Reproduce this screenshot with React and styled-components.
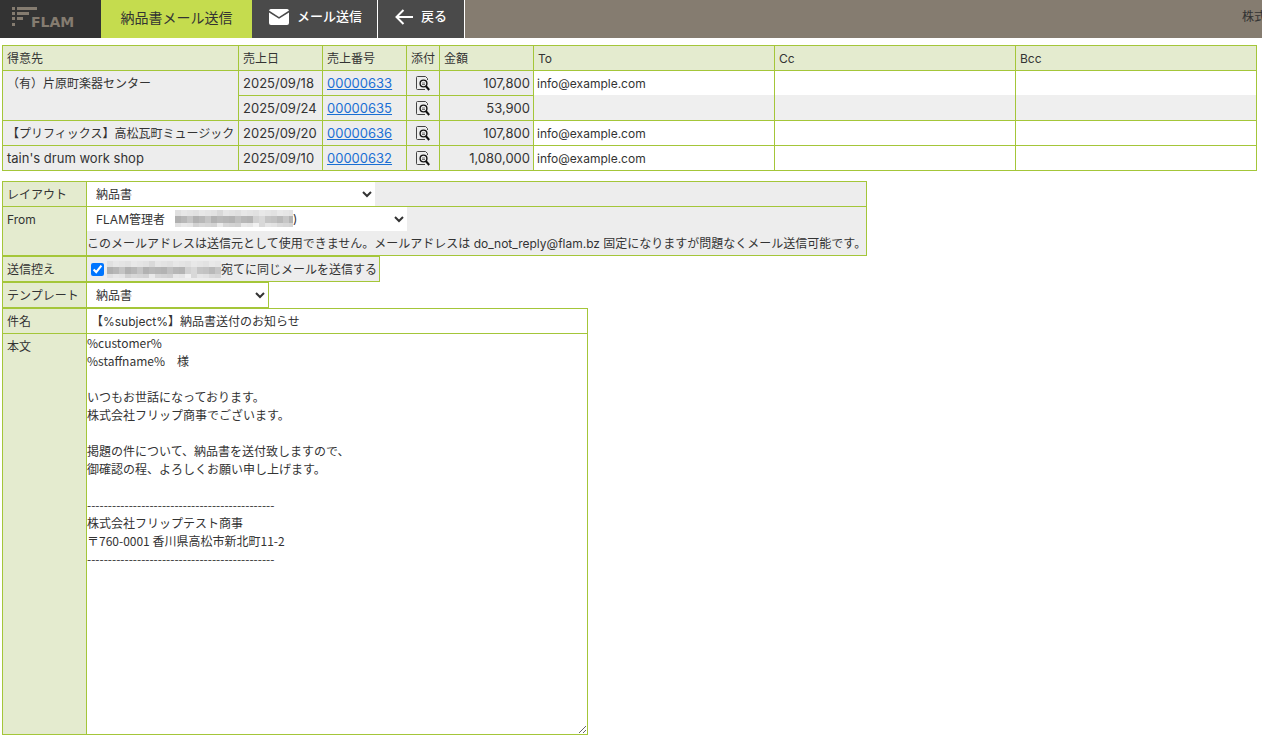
import { useState } from "react";
import styled, { createGlobalStyle } from "styled-components";

const sales = [
  {
    customer: "（有）片原町楽器センター",
    to: "info@example.com",
    slips: [
      { date: "2025/09/18", no: "00000633", amount: "107,800" },
      { date: "2025/09/24", no: "00000635", amount: "53,900" },
    ],
  },
  {
    customer: "【プリフィックス】高松瓦町ミュージック",
    to: "info@example.com",
    slips: [{ date: "2025/09/20", no: "00000636", amount: "107,800" }],
  },
  {
    customer: "tain's drum work shop",
    to: "info@example.com",
    slips: [{ date: "2025/09/10", no: "00000632", amount: "1,080,000" }],
  },
];

const isLatin = (text) => /^[\x20-\x7e]+$/.test(text);

const line = "-".repeat(45);

const mailBody = `%customer%
%staffname%　様

いつもお世話になっております。
株式会社フリップ商事でございます。

掲題の件について、納品書を送付致しますので、
御確認の程、よろしくお願い申し上げます。

${line}
株式会社フリップテスト商事
〒760-0001 香川県高松市新北町11-2
${line}`;

// one hex digit per 6px block, f = lightest
const mosaicRows = [
  "eeeeeeedeeeeeeeeeeee",
  "bbcbbcbbbbcbbddccbcb",
  "eeeddddedddeefdeeddd",
];

const Mosaic = ({ width }) => (
  <svg width={width} height="17" aria-hidden="true" shapeRendering="crispEdges">
    {mosaicRows.map((row, y) =>
      row.split("").map((c, x) => (
        <rect
          key={`${x}-${y}`}
          x={x * 6}
          y={[0, 6, 13][y]}
          width="6"
          height={[6, 7, 4][y]}
          fill={`#${c}${(x * 7) % 10}${c}${(x * 7) % 10}${c}${(x * 7) % 10}`}
        />
      ))
    )}
  </svg>
);

const LogoMark = () => (
  <svg width="26" height="20" fill="#857c70" aria-hidden="true">
    <path d="M0 0h3v3H0zM0 5h3v3H0zM0 10h3v3H0zM0 16h3v3H0z" />
    <path d="M5 0h20v3H5zM5 5h12v3H5zM5 10h6v3H5z" />
  </svg>
);

const MailIcon = () => (
  <svg width="20" height="16" viewBox="0 0 20 16" aria-hidden="true">
    <path fill="#fff" d="M2 0h16a2 2 0 0 1 2 1.5L10 8 0 1.5A2 2 0 0 1 2 0z" />
    <path fill="#fff" d="M0 3.5l10 6.3 10-6.3V14a2 2 0 0 1-2 2H2a2 2 0 0 1-2-2z" />
  </svg>
);

const BackIcon = () => (
  <svg width="18" height="16" viewBox="0 0 18 16" fill="none" stroke="#fff" strokeWidth="2" aria-hidden="true">
    <path d="M8.5 1L1.5 8l7 7M1.5 8H18" />
  </svg>
);

const PreviewIcon = () => (
  <svg width="14" height="15" viewBox="0 0 14 15" fill="none" aria-hidden="true">
    <path d="M11.5 4V2.5L9.5.5H1.5a1 1 0 0 0-1 1v11a1 1 0 0 0 1 1H9" stroke="#444" />
    <circle cx="7.5" cy="7.5" r="3.4" stroke="#111" strokeWidth="1.4" />
    <path d="M6 7h3M6 8.5h3" stroke="#555" strokeWidth=".8" />
    <path d="M9.8 10l3.4 4" stroke="#111" strokeWidth="2" />
  </svg>
);

const App = () => {
  const [copy, setCopy] = useState(true);

  return (
    <>
      <GlobalStyle />
      <Header>
        <Logo>
          <LogoMark />
          <span>FLAM</span>
        </Logo>
        <PageTitle>納品書メール送信</PageTitle>
        <HeaderButton type="button" $width={125}>
          <MailIcon />
          <span>メール送信</span>
        </HeaderButton>
        <HeaderButton type="button" $width={86}>
          <BackIcon />
          <span>戻る</span>
        </HeaderButton>
        <Company>株式</Company>
      </Header>
      <Main>
        <SalesTable>
          <colgroup>
            <col style={{ width: 236 }} />
            <col style={{ width: 84 }} />
            <col style={{ width: 84 }} />
            <col style={{ width: 33 }} />
            <col style={{ width: 94 }} />
            <col />
            <col />
            <col />
          </colgroup>
          <thead>
            <tr>
              <Th>得意先</Th>
              <Th>売上日</Th>
              <Th>売上番号</Th>
              <Th>添付</Th>
              <Th>金額</Th>
              <Th>To</Th>
              <Th>Cc</Th>
              <Th>Bcc</Th>
            </tr>
          </thead>
          <tbody>
            {sales.map((row) =>
              row.slips.map((slip, i) => (
                <tr key={slip.no}>
                  {i === 0 && (
                    <Td rowSpan={row.slips.length} $large={isLatin(row.customer)}>
                      {row.customer}
                    </Td>
                  )}
                  <Td $large>{slip.date}</Td>
                  <Td $large>
                    <a href={`#${slip.no}`}>{slip.no}</a>
                  </Td>
                  <IconTd>
                    <IconButton type="button" aria-label={slip.no}>
                      <PreviewIcon />
                    </IconButton>
                  </IconTd>
                  <Td $large $align="right">{slip.amount}</Td>
                  {i === 0 &&
                    ["To", "Cc", "Bcc"].map((field) => (
                      <InputTd key={field} rowSpan={row.slips.length}>
                        {row.slips.map((s, n) => (
                          <AddressInput
                            key={s.no}
                            type="text"
                            aria-label={field}
                            disabled={n > 0}
                            defaultValue={field === "To" && n === 0 ? row.to : ""}
                          />
                        ))}
                      </InputTd>
                    ))}
                </tr>
              ))
            )}
          </tbody>
        </SalesTable>

        <FormTable $width={865}>
          <tbody>
            <tr>
              <FormTh><label htmlFor="layout">レイアウト</label></FormTh>
              <FormTd>
                <Select id="layout" $width={288}>
                  <option>納品書</option>
                </Select>
              </FormTd>
            </tr>
            <tr>
              <FormTh><label htmlFor="from">From</label></FormTh>
              <FormTd>
                <SelectWrap>
                  <Select id="from" $width={320}>
                    <option>FLAM管理者</option>
                  </Select>
                  <Masked>
                    <Mosaic width={118} />)
                  </Masked>
                </SelectWrap>
                <Note>
                  このメールアドレスは送信元として使用できません。メールアドレスは do_not_reply@flam.bz 固定になりますが問題なくメール送信可能です。
                </Note>
              </FormTd>
            </tr>
          </tbody>
        </FormTable>
        <FormTable $width={378}>
          <tbody>
            <tr>
              <FormTh>送信控え</FormTh>
              <FormTd>
                <CheckLabel>
                  <input type="checkbox" checked={copy} onChange={(e) => setCopy(e.target.checked)} />
                  <Mosaic width={114} />
                  <span>宛てに同じメールを送信する</span>
                </CheckLabel>
              </FormTd>
            </tr>
          </tbody>
        </FormTable>
        <FormTable $width={267}>
          <tbody>
            <tr>
              <FormTh><label htmlFor="template">テンプレート</label></FormTh>
              <FormTd>
                <Select id="template" $width={181}>
                  <option>納品書</option>
                </Select>
              </FormTd>
            </tr>
          </tbody>
        </FormTable>
        <FormTable $width={586}>
          <tbody>
            <tr>
              <FormTh><label htmlFor="subject">件名</label></FormTh>
              <FormTd>
                <SubjectInput id="subject" type="text" defaultValue="【%subject%】納品書送付のお知らせ" />
              </FormTd>
            </tr>
            <tr>
              <FormTh><label htmlFor="body">本文</label></FormTh>
              <FormTd>
                <Body id="body" defaultValue={mailBody} spellCheck={false} />
              </FormTd>
            </tr>
          </tbody>
        </FormTable>
      </Main>
    </>
  );
};

export default App;

const GlobalStyle = createGlobalStyle`
  * {
    box-sizing: border-box;
  }
  body {
    margin: 0;
    overflow-x: hidden;
    background: #fff;
    color: #333;
    font-family: Inter, "Noto Sans CJK JP", sans-serif;
    font-size: 12px;
    font-weight: 400;
  }
  input, select, textarea, button {
    font: inherit;
    color: inherit;
  }
  svg {
    display: block;
    flex-shrink: 0;
  }
`;
const Header = styled.header`
  display: flex;
  height: 38px;
  overflow: hidden;
  background: #857c70;
`;
const Logo = styled.div`
  display: flex;
  width: 101px;
  padding: 7px 0 0 12px;
  background: #333;
  color: #857c70;
  span {
    margin: 7px 0 0 -7px;
    font: bold 14px/16px "DejaVu Sans", sans-serif;
  }
`;
const PageTitle = styled.h1`
  width: 151px;
  margin: 0;
  background: #c5dc4e;
  font-size: 14px;
  font-weight: 400;
  line-height: 36px;
  text-align: center;
`;
const HeaderButton = styled.button`
  display: flex;
  align-items: center;
  gap: 8px;
  width: ${(p) => p.$width + 1}px;
  padding: 0 0 4px 17px;
  border: none;
  border-right: 1px solid #fff;
  background: #4a4a4a;
  color: #fff;
  font-size: 13px;
  font-weight: 500;
  white-space: nowrap;
  cursor: pointer;
  span {
    padding-bottom: 3px;
  }
`;
const Company = styled.div`
  width: 20px;
  margin-left: auto;
  line-height: 33px;
  white-space: nowrap;
`;
const Main = styled.main`
  padding: 7px 5px 7px 2px;
`;
const SalesTable = styled.table`
  width: 100%;
  margin-bottom: 10px;
  border-collapse: collapse;
  table-layout: fixed;
`;
const Th = styled.th`
  height: 25px;
  padding: 2px 4px 0;
  border: 1px solid #a4c639;
  background: #e4ebcf;
  font-weight: 400;
  line-height: 22px;
  text-align: left;
  white-space: nowrap;
`;
const Td = styled.td`
  height: 25px;
  padding: ${(p) => (p.$large ? "0 3px 0 4px" : "2px 4px 0")};
  border: 1px solid #a4c639;
  background: #ededed;
  font-size: ${(p) => (p.$large ? 13 : 12)}px;
  line-height: ${(p) => (p.$large ? 24 : 22)}px;
  text-align: ${(p) => p.$align || "left"};
  vertical-align: top;
  white-space: nowrap;
  a {
    color: #1a6fd4;
  }
`;
const IconTd = styled(Td)`
  padding: 0;
`;
const IconButton = styled.button`
  display: flex;
  align-items: center;
  justify-content: center;
  width: 100%;
  height: 24px;
  padding: 0;
  border: none;
  background: none;
  cursor: pointer;
`;
const InputTd = styled(Td)`
  padding: 0;
  background: #efefef;
`;
const AddressInput = styled.input`
  display: block;
  width: 100%;
  height: 24px;
  padding: 1px 3px 0;
  border: none;
  border-radius: 0;
  background: #fff;
  &:disabled {
    background: #efefef;
  }
`;
const FormTable = styled.table`
  width: ${(p) => p.$width}px;
  max-width: 100%;
  border-collapse: collapse;
  table-layout: fixed;
`;
const FormTh = styled(Th)`
  width: 84px;
  vertical-align: top;
`;
const FormTd = styled.td`
  height: 25px;
  padding: 0;
  border: 1px solid #a4c639;
  background: #ededed;
  vertical-align: top;
`;
const Select = styled.select`
  display: block;
  width: ${(p) => p.$width}px;
  max-width: 100%;
  height: 24px;
  padding: 0 0 0 5px;
  border: none;
  border-radius: 0;
  background: #fff;
`;
const SelectWrap = styled.div`
  position: relative;
`;
const Masked = styled.span`
  position: absolute;
  top: 3px;
  left: 88px;
  display: flex;
  line-height: 18px;
  pointer-events: none;
`;
const Note = styled.p`
  margin: 0;
  padding-top: 2px;
  line-height: 22px;
  white-space: nowrap;
`;
const CheckLabel = styled.label`
  display: flex;
  align-items: center;
  height: 24px;
  white-space: nowrap;
  input {
    width: 13px;
    height: 13px;
    margin: 0 3px 0 4px;
  }
  span {
    padding-bottom: 2px;
  }
`;
const SubjectInput = styled(AddressInput)`
  padding: 0 4px 2px;
`;
const Body = styled.textarea`
  display: block;
  width: 100%;
  height: 400px;
  padding: 0;
  border: none;
  background: #fff;
  font-family: "Noto Sans CJK JP", sans-serif;
  line-height: 18px;
  resize: both;
`;
